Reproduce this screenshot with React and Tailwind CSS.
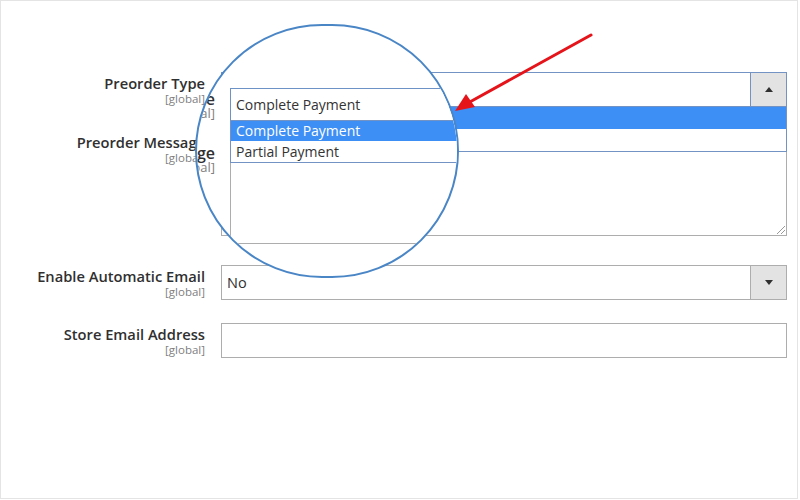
const labelClass = "text-[14.7px] leading-[18px] font-semibold text-[#303030]";
const scopeClass = "text-[11.5px] leading-[14px] text-[#808080]";

function TriangleUp() {
    return <span className="w-0 h-0 border-x-[4px] border-x-transparent border-b-[5px] border-b-[#303030]" />;
}

function TriangleDown() {
    return <span className="w-0 h-0 border-x-[4px] border-x-transparent border-t-[5px] border-t-[#303030]" />;
}

function FieldRow({ label, className = "", children }) {
    return (
        <div className={`flex ${className}`}>
            <div className="w-[204px] text-right pt-[2px]">
                <div className={labelClass}>{label}</div>
                <div className={scopeClass}>[global]</div>
            </div>
            <div className="ml-[16px] w-[566px]">{children}</div>
        </div>
    );
}

function Magnifier() {
    return (
        <div className="absolute left-[194px] top-[23px] w-[264px] h-[254px] rounded-full border-2 border-[#4a86c6] bg-white overflow-hidden z-20">
            <div className="absolute left-[-182px] top-[62px] flex flex-col">
                <div className="flex">
                    <div className="w-[200px] text-right pt-[3px]">
                        <div className="text-[16px] leading-[16px] font-semibold text-[#303030]">Preorder Type</div>
                        <div className="text-[13px] leading-[13px] text-[#808080]">[global]</div>
                    </div>
                    <div className="ml-[15px] w-[320px] relative">
                        <div className="h-[33px] border border-[#6d93c6] bg-white pl-[5px] flex items-center text-[14px] text-[#333]">
                            Complete Payment
                        </div>
                        <div className="absolute left-0 right-0 top-[32px] border border-[#7393c4] bg-white z-10">
                            <div className="h-[20px] bg-[#3d8ef5] text-white text-[14px] leading-[20px] pl-[5px]">Complete Payment</div>
                            <div className="h-[21px] text-[#333] text-[14px] leading-[21px] pl-[5px]">Partial Payment</div>
                        </div>
                    </div>
                </div>
                <div className="flex mt-[23px]">
                    <div className="w-[200px] text-right pt-[1px]">
                        <div className="text-[16px] leading-[16px] font-semibold text-[#303030]">Preorder Message</div>
                        <div className="text-[13px] leading-[13px] text-[#808080]">[global]</div>
                    </div>
                    <div className="ml-[15px] w-[320px] h-[100px] border border-[#adadad]" />
                </div>
            </div>
        </div>
    );
}

function RedArrow() {
    return (
        <svg className="absolute left-[-1px] top-[-1px] z-30 pointer-events-none" width="800" height="500" viewBox="0 0 800 500">
            <line x1="591" y1="35" x2="468" y2="103" stroke="#e5141b" strokeWidth="3" strokeLinecap="round" />
            <polygon points="455,111 475,107 466,94" fill="#e5141b" />
        </svg>
    );
}

export default function App() {
    return (
        <div className="w-[800px] h-[500px] bg-white font-['Open_Sans',sans-serif]">
            <div className="relative w-[798px] h-[499px] border border-[#e4e4e4] overflow-hidden">
                <div className="flex flex-col pt-[71px]">
                    <FieldRow label="Preorder Type">
                        <div className="relative h-[35px] border border-[#7393c4] bg-white flex">
                            <div className="flex-1 pl-[14px] flex items-center text-[14px] text-[#303030]">Complete Payment</div>
                            <div className="w-[36px] bg-[#e3e3e3] border-l border-[#7393c4] flex items-center justify-center">
                                <TriangleUp />
                            </div>
                            <div className="absolute left-[-1px] right-[-1px] top-[33px] border border-[#7393c4] bg-white z-10">
                                <div className="h-[22px] bg-[#3d8ef5] text-white text-[14px] leading-[22px] pl-[14px]">Complete Payment</div>
                                <div className="h-[22px] text-[#303030] text-[14px] leading-[22px] pl-[14px]">Partial Payment</div>
                            </div>
                        </div>
                    </FieldRow>

                    <FieldRow label="Preorder Message" className="mt-[24px]">
                        <div className="relative h-[105px] border border-[#adadad] bg-white">
                            <svg className="absolute right-[1px] bottom-[1px]" width="10" height="10" viewBox="0 0 10 10">
                                <line x1="2" y1="10" x2="10" y2="2" stroke="#9a9a9a" strokeWidth="1" />
                                <line x1="6" y1="10" x2="10" y2="6" stroke="#9a9a9a" strokeWidth="1" />
                            </svg>
                        </div>
                    </FieldRow>

                    <FieldRow label="Enable Automatic Email" className="mt-[29px]">
                        <div className="h-[35px] border border-[#adadad] bg-white flex">
                            <div className="flex-1 pl-[5px] flex items-center text-[14.5px] text-[#303030]">No</div>
                            <div className="w-[36px] bg-[#e3e3e3] border-l border-[#adadad] flex items-center justify-center">
                                <TriangleDown />
                            </div>
                        </div>
                    </FieldRow>

                    <FieldRow label="Store Email Address" className="mt-[23px]">
                        <div className="h-[35px] border border-[#adadad] bg-white" />
                    </FieldRow>
                </div>

                <Magnifier />
                <RedArrow />
            </div>
        </div>
    );
}
